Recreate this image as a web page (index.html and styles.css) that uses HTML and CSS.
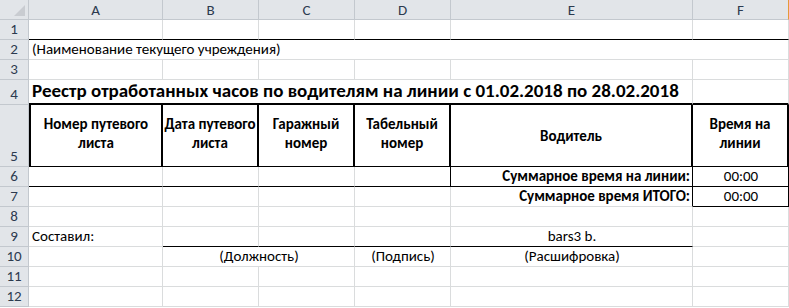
FILE: index.html
```html
<!DOCTYPE html>
<html lang="ru">
<head>
    <meta charset="UTF-8">
    <title>Реестр отработанных часов</title>
<link rel="stylesheet" href="styles.css">
</head>
<body>
    <div class="sheet">
        <!-- column headers -->
        <div class="hd corner"><span class="tri"></span></div>
        <div class="hd">A</div>
        <div class="hd">B</div>
        <div class="hd">C</div>
        <div class="hd">D</div>
        <div class="hd">E</div>
        <div class="hd last">F</div>

        <!-- 1 -->
        <div class="rn">1</div>
        <div class="c b-bot"></div><div class="c b-bot"></div><div class="c b-bot"></div><div class="c b-bot"></div><div class="c b-bot"></div><div class="c b-bot"></div>

        <!-- 2 -->
        <div class="rn">2</div>
        <div class="c txt span6">(Наименование текущего учреждения)</div>

        <!-- 3 -->
        <div class="rn">3</div>
        <div class="c"></div><div class="c"></div><div class="c"></div><div class="c"></div><div class="c"></div><div class="c"></div>

        <!-- 4 -->
        <div class="rn">4</div>
        <div class="c title span5 thick-bot">Реестр отработанных часов по водителям на линии с 01.02.2018 по 28.02.2018</div>
        <div class="c thick-bot"></div>

        <!-- 5 -->
        <div class="rn">5</div>
        <div class="c th thick-left thick-right">Номер путевого<br>листа</div>
        <div class="c th thick-right">Дата путевого<br>листа</div>
        <div class="c th thick-right">Гаражный<br>номер</div>
        <div class="c th thick-right">Табельный<br>номер</div>
        <div class="c th th-single thick-right">Водитель</div>
        <div class="c th thick-right">Время на<br>линии</div>

        <!-- 6 -->
        <div class="rn">6</div>
        <div class="c b-bot"></div>
        <div class="c b-bot"></div>
        <div class="c b-bot"></div>
        <div class="c b-bot b-right"></div>
        <div class="c sum b-bot b-right">Суммарное время на линии:</div>
        <div class="c num b-bot b-right">00:00</div>

        <!-- 7 -->
        <div class="rn">7</div>
        <div class="c"></div><div class="c"></div><div class="c"></div><div class="c"></div>
        <div class="c sum b-right">Суммарное время ИТОГО:</div>
        <div class="c num b-bot b-right">00:00</div>

        <!-- 8 -->
        <div class="rn">8</div>
        <div class="c"></div><div class="c"></div><div class="c"></div><div class="c"></div><div class="c"></div><div class="c"></div>

        <!-- 9 -->
        <div class="rn">9</div>
        <div class="c txt">Составил:</div>
        <div class="c b-bot"></div>
        <div class="c b-bot"></div>
        <div class="c b-bot"></div>
        <div class="c txt center b-bot">bars3 b.</div>
        <div class="c"></div>

        <!-- 10 -->
        <div class="rn">10</div>
        <div class="c"></div>
        <div class="c txt center span2">(Должность)</div>
        <div class="c txt center">(Подпись)</div>
        <div class="c txt center">(Расшифровка)</div>
        <div class="c"></div>

        <!-- 11 -->
        <div class="rn">11</div>
        <div class="c"></div><div class="c"></div><div class="c"></div><div class="c"></div><div class="c"></div><div class="c"></div>

        <!-- 12 -->
        <div class="rn">12</div>
        <div class="c"></div><div class="c"></div><div class="c"></div><div class="c"></div><div class="c"></div><div class="c"></div>
    </div>
</body>
</html>
```

FILE: styles.css
```css
* {
    box-sizing: border-box;
}
body {
    margin: 0;
    background: #fff;
    font-family: Carlito, 'Liberation Sans', Arial, sans-serif;
    font-size: 15px;
    color: #000;
    overflow: hidden;
}
.sheet {
    display: grid;
    grid-template-columns: 29px 134px 96px 96px 96px 242px 96px;
    grid-template-rows: 20px 20px 20px 20px 25px 62px 20px 20px 20px 20px 20px 20px 20px;
}

/* headers */
.hd {
    background: #e2e5e9;
    border-right: 1px solid #c3c8ce;
    border-bottom: 1px solid #c3c8ce;
    color: #2c3a4f;
    font-size: 15px;
    display: flex;
    align-items: center;
    justify-content: center;
}
.hd.last {
    border-right-color: #e49a3a;
}
.corner {
    position: relative;
}
.corner .tri {
    position: absolute;
    right: 3px;
    bottom: 3px;
    width: 0;
    height: 0;
    border-left: 11px solid transparent;
    border-bottom: 11px solid #c9ccd1;
}
.rn {
    background: #e2e5e9;
    border-right: 1px solid #c3c8ce;
    border-bottom: 1px solid #c3c8ce;
    color: #2c3a4f;
    font-size: 15px;
    line-height: 18px;
    display: flex;
    align-items: flex-end;
    justify-content: center;
    padding-bottom: 1px;
}

/* cells */
.c {
    border-right: 1px solid #dadcdd;
    border-bottom: 1px solid #dadcdd;
    white-space: nowrap;
    display: flex;
    align-items: flex-end;
    padding: 0 2px 1px 3px;
    line-height: 18px;
}
.span2 { grid-column: span 2; }
.span5 { grid-column: span 5; }
.span6 { grid-column: span 6; }
.center {
    justify-content: center;
}
.title {
    font-weight: bold;
    font-size: 19px;
    line-height: 22px;
    padding-bottom: 1px;
}
.th {
    font-weight: bold;
    text-align: center;
    justify-content: center;
    align-items: center;
    line-height: 19px;
    padding: 0 0 3px 0;
}
.th-single {
    padding-top: 4px;
}
.sum {
    font-weight: bold;
    justify-content: flex-end;
}
.num {
    justify-content: center;
}

/* ruled borders */
.b-bot { border-bottom-color: #000; }
.b-right { border-right-color: #000; }
.thick-bot { border-bottom: 2px solid #000; }
.thick-right { border-right: 2px solid #000; border-bottom-color: #000; }
.thick-left { border-left: 2px solid #000; }
```
